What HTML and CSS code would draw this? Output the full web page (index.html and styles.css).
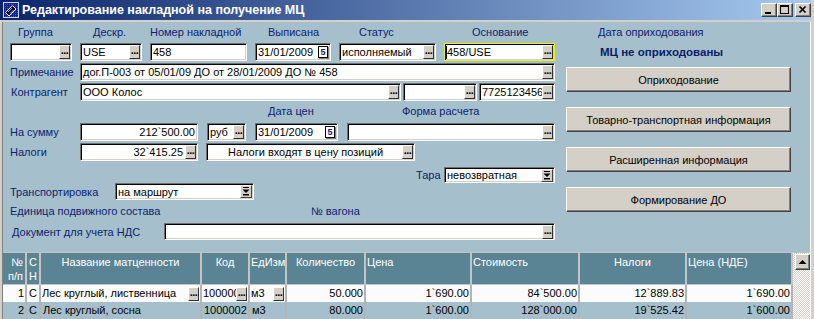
FILE: index.html
```html
<!DOCTYPE html>
<html lang="ru">
<head>
    <meta charset="UTF-8">
    <title>Редактирование накладной на получение МЦ</title>
    <link rel="stylesheet" href="styles.css">
</head>
<body>
<div class="window">
    <div class="titlebar">
        <svg class="app-icon" width="16" height="16" viewBox="0 0 16 16">
            <defs>
                <pattern id="chk" width="2" height="2" patternUnits="userSpaceOnUse">
                    <rect width="2" height="2" fill="#10208c"/>
                    <rect width="1" height="1" fill="#3a5ad8"/>
                </pattern>
            </defs>
            <rect width="16" height="16" fill="#c8d4f0"/>
            <rect x="1" y="1" width="14" height="14" fill="url(#chk)"/>
            <path d="M2.5 10.5 L9.5 3.5 L13 7 L6 14 Z" fill="#000048" stroke="#fff" stroke-width="1"/>
            <path d="M5 10 L9 6 M7 11.5 L10.5 8" stroke="#8fa8ff" stroke-width="1"/>
        </svg>
        <span class="title">Редактирование накладной на получение МЦ</span>
        <div class="caption-btns">
            <span class="cbtn"><svg width="14" height="12" viewBox="0 0 14 12"><rect x="3" y="8" width="6" height="2" fill="#000"/></svg></span>
            <span class="cbtn"><svg width="14" height="12" viewBox="0 0 14 12"><rect x="2.5" y="1.5" width="8" height="8" fill="none" stroke="#000"/><rect x="2" y="1" width="9" height="2" fill="#000"/></svg></span>
            <span class="cbtn close"><svg width="14" height="12" viewBox="0 0 14 12"><path d="M3.5 2.5 L9.5 8.5 M9.5 2.5 L3.5 8.5" stroke="#000" stroke-width="1.7"/></svg></span>
        </div>
    </div>

    <div class="client">
        <div class="top">
            <div class="form">
                <div class="head-grid">
                    <span class="lbl p-group">Группа</span>
                    <span class="lbl p-descr">Дескр.</span>
                    <span class="lbl">Номер накладной</span>
                    <span class="lbl p-date">Выписана</span>
                    <span class="lbl p-status">Статус</span>
                    <span class="lbl p-base">Основание</span>

                    <div class="fld"><span class="val"></span><span class="dots">...</span></div>
                    <div class="fld"><span class="val">USE</span><span class="dots">...</span></div>
                    <div class="fld"><span class="val">458</span></div>
                    <div class="fld"><span class="val">31/01/2009</span><span class="cal">5</span></div>
                    <div class="fld"><span class="val">исполняемый</span><span class="dots">...</span></div>
                    <div class="fld active"><span class="caret"></span><span class="val">458/USE</span><span class="dots">...</span></div>
                </div>

                <div class="row">
                    <span class="lbl w70">Примечание</span>
                    <div class="fld w475"><span class="val">дог.П-003 от 05/01/09 ДО от 28/01/2009 ДО № 458</span><span class="dots">...</span></div>
                </div>

                <div class="row">
                    <span class="lbl w70 pl1">Контрагент</span>
                    <div class="fld w321"><span class="val">ООО Колос</span><span class="dots">...</span></div>
                    <div class="fld w74 ml2"><span class="val"></span><span class="dots">...</span></div>
                    <div class="fld w76 ml2"><span class="val">7725123456</span><span class="dots">...</span></div>
                </div>

                <div class="lbl-row pl258">
                    <span class="lbl w134">Дата цен</span>
                    <span class="lbl">Форма расчета</span>
                </div>

                <div class="row">
                    <span class="lbl w70">На сумму</span>
                    <div class="fld w118"><span class="val r">212`500.00</span></div>
                    <div class="fld w39 ml9"><span class="val">руб</span><span class="dots">...</span></div>
                    <div class="fld w83 ml9"><span class="val">31/01/2009</span><span class="cal">5</span></div>
                    <div class="fld w208 ml9"><span class="val"></span><span class="dots">...</span></div>
                </div>

                <div class="row">
                    <span class="lbl w70">Налоги</span>
                    <div class="fld w118"><span class="val r">32`415.25</span><span class="dots">...</span></div>
                    <div class="fld w209 ml8"><span class="val c">Налоги входят в цену позиций</span><span class="dots">...</span></div>
                </div>

                <div class="row tara-row pl406">
                    <span class="lbl w28">Тара</span>
                    <div class="fld w111"><span class="val">невозвратная</span><span class="drop"><svg width="8" height="9" viewBox="0 0 8 9"><rect x="1" y="0" width="6" height="1" fill="#000"/><path d="M0.5 2.5 H7.5 L4 6 Z" fill="#000"/><rect x="1" y="7" width="6" height="1.5" fill="#000"/></svg></span></div>
                </div>

                <div class="row trans-row">
                    <span class="lbl w105">Транспортировка</span>
                    <div class="fld w139"><span class="val">на маршрут</span><span class="drop"><svg width="8" height="9" viewBox="0 0 8 9"><rect x="1" y="0" width="6" height="1" fill="#000"/><path d="M0.5 2.5 H7.5 L4 6 Z" fill="#000"/><rect x="1" y="7" width="6" height="1.5" fill="#000"/></svg></span></div>
                </div>

                <div class="lbl-row unit-row">
                    <span class="lbl w301">Единица подвижного состава</span>
                    <span class="lbl">№ вагона</span>
                </div>

                <div class="row doc-row">
                    <span class="lbl w154 pl2">Документ для учета НДС</span>
                    <div class="fld w391"><span class="val"></span><span class="dots">...</span></div>
                </div>
            </div>

            <div class="side">
                <div class="lbl side-lbl">Дата оприходования</div>
                <div class="side-state">МЦ не оприходованы</div>
                <div class="side-btns">
                    <button class="btn">Оприходование</button>
                    <button class="btn">Товарно-транспортная информация</button>
                    <button class="btn">Расширенная информация</button>
                    <button class="btn">Формирование ДО</button>
                </div>
            </div>
        </div>

        <div class="tbl">
            <div class="h r pr3">№<br>п/п</div>
            <div class="h">С<br>Н</div>
            <div class="h c">Название матценности</div>
            <div class="h c">Код</div>
            <div class="h pl0">ЕдИзм</div>
            <div class="h c">Количество</div>
            <div class="h pl0">Цена</div>
            <div class="h pl0">Стоимость</div>
            <div class="h c">Налоги</div>
            <div class="h pl0">Цена (НДЕ)</div>
            <div class="scroll"><span class="sbtn"><svg width="13" height="14" viewBox="0 0 13 14"><path d="M2.5 9 H10.5 L6.5 5 Z" fill="#000"/></svg></span></div>

            <div class="d cur r">1</div>
            <div class="d cur">С</div>
            <div class="d cur ed"><span class="cv">Лес круглый, лиственница</span><span class="dots">...</span></div>
            <div class="d cur ed"><span class="cv">1000002</span><span class="dots">...</span></div>
            <div class="d cur ed"><span class="cv">м3</span><span class="dots">...</span></div>
            <div class="d cur r">50.000</div>
            <div class="d cur r">1`690.00</div>
            <div class="d cur r">84`500.00</div>
            <div class="d cur r">12`889.83</div>
            <div class="d cur r">1`690.00</div>

            <div class="d r">2</div>
            <div class="d">С</div>
            <div class="d">Лес круглый, сосна</div>
            <div class="d">1000002</div>
            <div class="d">м3</div>
            <div class="d r">80.000</div>
            <div class="d r">1`600.00</div>
            <div class="d r">128`000.00</div>
            <div class="d r">19`525.42</div>
            <div class="d r">1`600.00</div>
        </div>
    </div>
</div>
</body>
</html>
```

FILE: styles.css
```css
* {
    margin: 0;
    padding: 0;
    box-sizing: border-box;
}
body {
    width: 814px;
    height: 319px;
    overflow: hidden;
    background-color: #d4d0c8;
    font-family: "Liberation Sans", Arial, sans-serif;
    font-size: 11px;
    color: #000;
}
.window {
    width: 814px;
    height: 319px;
    display: flex;
    flex-direction: column;
    padding-right: 3px;
}

/* title bar */
.titlebar {
    height: 20px;
    flex-shrink: 0;
    display: flex;
    align-items: center;
    padding-left: 3px;
    background: linear-gradient(to right, #0a246a, #a6caf0);
}
.app-icon {
    display: block;
}
.title {
    margin-left: 3px;
    color: #fff;
    font-weight: bold;
    font-size: 12.5px;
}
.caption-btns {
    margin-left: auto;
    display: flex;
}
.cbtn {
    width: 16px;
    height: 14px;
    display: flex;
    align-items: center;
    justify-content: center;
    background-color: #d4d0c8;
    border: 1px solid;
    border-color: #fff #404040 #404040 #fff;
    box-shadow: inset -1px -1px 0 #808080;
}
.cbtn svg {
    display: block;
}
.cbtn.close {
    margin-left: 2px;
}

/* client */
.client {
    flex: 1;
    margin-top: 2px;
    margin-left: 2px;
    border-left: 1px solid #808080;
    border-right: 1px solid #fff;
    background-color: #a5c0cc;
    overflow: hidden;
}
.top {
    display: flex;
    height: 230px;
}
.form {
    width: 552px;
    padding-left: 7px;
}
.lbl {
    color: #0c2270;
    white-space: nowrap;
    line-height: 20px;
}
.head-grid {
    display: grid;
    grid-template-columns: 62px 62px 97px 76px 97px 111px;
    grid-template-rows: 20px 18px;
    column-gap: 8px;
    row-gap: 1px;
}
.p-group { padding-left: 8px; }
.p-descr { padding-left: 13px; }
.p-date { padding-left: 13px; }
.p-status { padding-left: 20px; }
.p-base { padding-left: 28px; }

.row {
    display: flex;
    align-items: center;
    height: 18px;
    margin-top: 2px;
}
.lbl-row {
    display: flex;
    height: 20px;
}
.tara-row {
    height: 16px;
    margin-top: 6px;
}
.trans-row {
    height: 17px;
    margin-top: 0;
}
.unit-row {
    margin-top: 1px;
}
.doc-row {
    height: 17px;
    margin-top: 2px;
}

.w28 { width: 28px; }
.w39 { width: 39px; }
.w70 { width: 70px; }
.w74 { width: 74px; }
.w76 { width: 76px; }
.w83 { width: 83px; }
.w105 { width: 105px; }
.w111 { width: 111px; }
.w118 { width: 118px; }
.w134 { width: 134px; }
.w139 { width: 139px; }
.w154 { width: 154px; }
.w208 { width: 208px; }
.w209 { width: 209px; }
.w301 { width: 301px; }
.w321 { width: 321px; }
.w391 { width: 391px; }
.w475 { width: 475px; }
.ml2 { margin-left: 2px; }
.ml8 { margin-left: 8px; }
.ml9 { margin-left: 9px; }
.pl1 { padding-left: 1px; }
.pl2 { padding-left: 2px; }
.pl258 { padding-left: 258px; }
.pl406 { padding-left: 406px; }

/* edit fields */
.fld {
    height: 100%;
    display: flex;
    align-items: center;
    background-color: #fff;
    border: 1px solid;
    border-color: #707070 #fff #fff #707070;
    box-shadow: inset 1px 1px 0 #000, inset -1px -1px 0 #d4d0c8;
    overflow: hidden;
}
.fld.active {
    border-color: #f0f000;
}
.val {
    flex: 1;
    padding-left: 2px;
    white-space: nowrap;
    overflow: hidden;
    line-height: 14px;
}
.val.r {
    text-align: right;
    padding-right: 2px;
}
.val.c {
    text-align: center;
}
.caret {
    width: 1px;
    height: 13px;
    margin-left: 1px;
    background-color: #000;
}
.fld.active .val {
    padding-left: 0;
}
.dots {
    flex-shrink: 0;
    width: 11px;
    height: 14px;
    margin-right: 1px;
    background-color: #d4d0c8;
    border: 1px solid;
    border-color: #fff #303030 #303030 #fff;
    font-size: 11px;
    font-weight: bold;
    line-height: 9px;
    letter-spacing: -0.6px;
    text-align: center;
    overflow: hidden;
}
.cal {
    flex-shrink: 0;
    width: 10px;
    height: 12px;
    margin-right: 2px;
    border: 1px solid #000;
    box-shadow: inset 0 0 0 1px #fff, 1px 1px 0 #808080;
    color: #0c2270;
    font-size: 9px;
    font-weight: bold;
    line-height: 10px;
    text-align: center;
}
.drop {
    flex-shrink: 0;
    width: 12px;
    height: 13px;
    margin-right: 1px;
    display: flex;
    align-items: center;
    justify-content: center;
    background-color: #d4d0c8;
    border: 1px solid;
    border-color: #fff #404040 #404040 #fff;
}
.drop svg {
    display: block;
}

/* right column */
.side {
    padding-left: 11px;
}
.side-lbl {
    padding-left: 32px;
}
.side-state {
    padding-left: 34px;
    line-height: 20px;
    font-weight: bold;
    font-size: 11.5px;
    color: #0c1c66;
}
.side-btns {
    display: flex;
    flex-direction: column;
    gap: 15px;
    margin-top: 5px;
}
.btn {
    width: 225px;
    height: 25px;
    background-color: #d4d0c8;
    border: 1px solid;
    border-color: #fff #404040 #404040 #fff;
    box-shadow: inset -1px -1px 0 #808080;
    font-family: "Liberation Sans", Arial, sans-serif;
    font-size: 11px;
    color: #000;
}

/* table */
.tbl {
    display: grid;
    grid-template-columns: 24px 14px 161px 48px 37px 79px 106px 108px 107px 106px 17px;
    grid-template-rows: 32px 17px 17px;
    border-top: 1px solid #c4c4c4;
}
.h {
    background-color: #5a8494;
    color: #fff;
    border-right: 2px solid #c4c4c4;
    border-bottom: 1px solid #c4c4c4;
    padding: 2px 2px 0;
    line-height: 14px;
    white-space: nowrap;
    overflow: hidden;
}
.h.c {
    text-align: center;
}
.h.r {
    text-align: right;
}
.h.pl0 {
    padding-left: 1px;
}
.d {
    border-right: 2px solid #b4b4b4;
    padding: 0 1px 0 2px;
    line-height: 17px;
    white-space: nowrap;
    overflow: hidden;
}
.d.r {
    text-align: right;
}
.d.cur {
    background-color: #fbfbfb;
}
.d.ed {
    display: flex;
    align-items: center;
    padding: 0 0 0 1px;
}
.cv {
    flex: 1;
    min-width: 0;
    overflow: hidden;
    white-space: nowrap;
}
.scroll {
    grid-row: 1 / span 3;
    grid-column: 11;
    padding: 1px 0 0 2px;
    background-color: #fff;
    background-image: repeating-conic-gradient(#d4d0c8 0 25%, #fff 0 50%);
    background-size: 2px 2px;
}
.sbtn {
    display: flex;
    width: 15px;
    height: 16px;
    align-items: center;
    justify-content: center;
    background-color: #d4d0c8;
    border: 1px solid;
    border-color: #fff #404040 #404040 #fff;
    box-shadow: inset -1px -1px 0 #808080;
}
```
